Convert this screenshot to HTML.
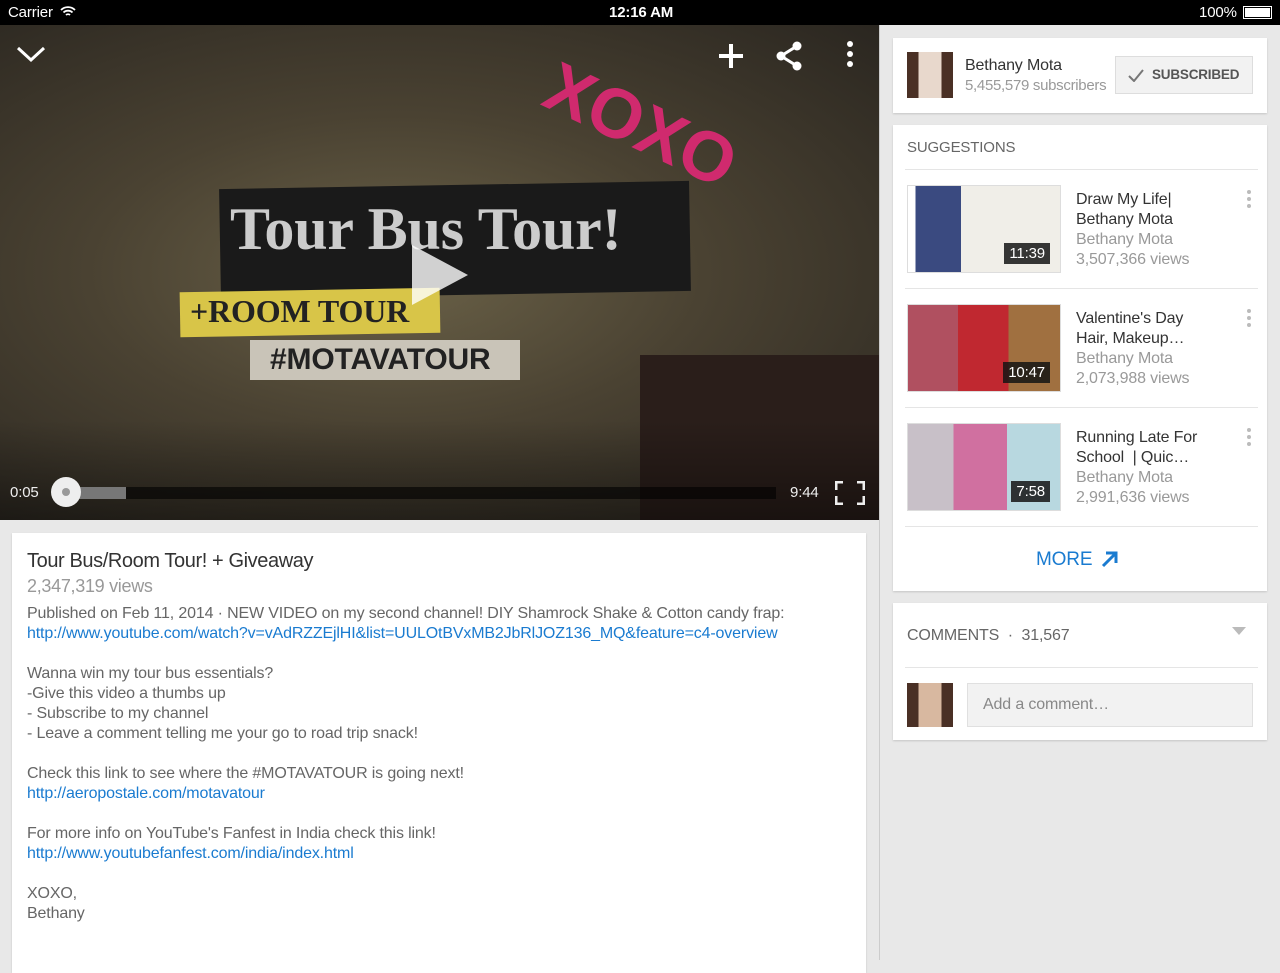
<!DOCTYPE html>
<html><head><meta charset="utf-8"><style>
*{margin:0;padding:0;box-sizing:border-box}
body{width:1280px;height:960px;overflow:hidden;background:#e8e8e8;font-family:"Liberation Sans",sans-serif;position:relative;letter-spacing:-0.15px}
.status{position:absolute;left:0;top:0;width:1280px;height:25px;background:#000;color:#fff;font-size:15px}
.video{position:absolute;left:0;top:25px;width:880px;height:495px;background:radial-gradient(ellipse at 45% 50%,#6b6248 0%,#4a4232 45%,#2a2620 100%);overflow:hidden}
.card{position:absolute;background:#fff;box-shadow:0 1px 2px rgba(0,0,0,.15)}
.a{color:#1a7bd0}
.desc{font-size:16px;color:#666;line-height:20px}
.g{color:#999}
.thumb{position:absolute;left:907px;width:154px;height:88px;border:1px solid #ddd}
.dur{position:absolute;right:10px;bottom:8px;background:rgba(20,20,20,.85);color:#fff;font-size:15px;padding:2px 5px}
.st{position:absolute;left:1076px;font-size:16px;line-height:20px;color:#333}
.dots{position:absolute;left:1247px;width:4px}
.dots i{display:block;width:4px;height:4px;border-radius:2px;background:#bbb;margin-bottom:3px}
.sep{position:absolute;left:905px;width:353px;height:1px;background:#e5e5e5}
</style></head><body>
<div class="status"><span style="position:absolute;left:8px;top:4px">Carrier</span>
<svg style="position:absolute;left:60px;top:5px" width="16" height="13" viewBox="0 0 16 13"><path d="M1 5a10 10 0 0 1 14 0M3.5 7.5a6.5 6.5 0 0 1 9 0M6 10a3 3 0 0 1 4 0" stroke="#fff" stroke-width="1.8" fill="none"/></svg>
<span style="position:absolute;left:609px;top:4px;font-weight:bold">12:16 AM</span>
<span style="position:absolute;left:1199px;top:4px">100%</span>
<div style="position:absolute;left:1243px;top:6px;width:29px;height:13px;border:1px solid #fff;padding:1px"><div style="background:#fff;height:100%"></div></div></div>
<div class="video">
<div style="position:absolute;left:220px;top:160px;width:470px;height:110px;background:#1a1a1a;transform:rotate(-1deg)"></div>
<div style="position:absolute;left:230px;top:170px;font:bold 60px 'Liberation Serif',serif;color:#ccc">Tour Bus Tour!</div>
<div style="position:absolute;left:180px;top:265px;width:260px;height:45px;background:#d8c548;transform:rotate(-1deg)"></div>
<div style="position:absolute;left:190px;top:268px;font:bold 32px 'Liberation Serif',serif;color:#222">+ROOM TOUR</div>
<div style="position:absolute;left:250px;top:315px;width:270px;height:40px;background:#c9c4b8"></div>
<div style="position:absolute;left:270px;top:318px;font:bold 30px 'Liberation Sans',sans-serif;color:#222">#MOTAVATOUR</div>
<div style="position:absolute;left:540px;top:60px;font:bold 70px 'Liberation Sans',sans-serif;color:#d02a6e;transform:rotate(25deg)">XOXO</div>
<div style="position:absolute;left:640px;top:330px;width:240px;height:165px;background:#2a1e1a"></div>
<div style="position:absolute;left:0;top:395px;width:880px;height:100px;background:linear-gradient(transparent,rgba(0,0,0,.4))"></div>
<svg style="position:absolute;left:410px;top:220px" width="58" height="60"><path d="M2 0L58 30L2 60Z" fill="rgba(255,255,255,.8)"/></svg>
<svg style="position:absolute;left:16px;top:20px" width="30" height="18"><path d="M2 3L15 15L28 3" stroke="#fff" stroke-width="3" fill="none"/></svg>
<svg style="position:absolute;left:717px;top:17px" width="28" height="28"><path d="M14 2V26M2 14H26" stroke="#fff" stroke-width="4"/></svg>
<svg style="position:absolute;left:776px;top:16px" width="28" height="30"><circle cx="21" cy="5" r="4.5" fill="#fff"/><circle cx="5" cy="15" r="4.5" fill="#fff"/><circle cx="21" cy="25" r="4.5" fill="#fff"/><path d="M21 5L5 15L21 25" stroke="#fff" stroke-width="3" fill="none"/></svg>
<div style="position:absolute;left:847px;top:16px"><div style="width:6px;height:6px;border-radius:3px;background:#fff;margin-bottom:4px"></div><div style="width:6px;height:6px;border-radius:3px;background:#fff;margin-bottom:4px"></div><div style="width:6px;height:6px;border-radius:3px;background:#fff"></div></div>
<span style="position:absolute;left:10px;top:459px;color:#eee;font-size:15px">0:05</span>
<div style="position:absolute;left:66px;top:462px;width:710px;height:12px;background:rgba(0,0,0,.6)"></div>
<div style="position:absolute;left:66px;top:462px;width:60px;height:12px;background:#777"></div>
<div style="position:absolute;left:51px;top:452px;width:30px;height:30px;border-radius:15px;background:#eee"><div style="margin:11px;width:8px;height:8px;border-radius:4px;background:#999"></div></div>
<span style="position:absolute;left:790px;top:459px;color:#eee;font-size:15px">9:44</span>
<svg style="position:absolute;left:835px;top:456px" width="30" height="24"><path d="M1 9V1H8M22 1H29V9M29 15V23H22M8 23H1V15" stroke="#eee" stroke-width="3" fill="none"/></svg>
</div>
<div style="position:absolute;left:879px;top:25px;width:1px;height:935px;background:#ccc"></div>
<div class="card" style="left:12px;top:533px;width:854px;height:440px">
<div style="position:absolute;left:15px;top:17px;font-size:20px;color:#333;letter-spacing:-0.4px">Tour Bus/Room Tour! + Giveaway</div>
<div style="position:absolute;left:15px;top:43px;font-size:18px;color:#999;letter-spacing:-0.3px">2,347,319 views</div>
<div class="desc" style="position:absolute;left:15px;top:71px;width:830px">Published on Feb 11, 2014 · NEW VIDEO on my second channel! DIY Shamrock Shake &amp; Cotton candy frap:<br><span class="a">http://www.youtube.com/watch?v=vAdRZZEjlHI&amp;list=UULOtBVxMB2JbRlJOZ136_MQ&amp;feature=c4-overview</span><br><br>Wanna win my tour bus essentials?<br>-Give this video a thumbs up<br>- Subscribe to my channel<br>- Leave a comment telling me your go to road trip snack!<br><br>Check this link to see where the #MOTAVATOUR is going next!<br><span class="a">http://aeropostale.com/motavatour</span><br><br>For more info on YouTube's Fanfest in India check this link!<br><span class="a">http://www.youtubefanfest.com/india/index.html</span><br><br>XOXO,<br>Bethany</div>
</div>
<div class="card" style="left:893px;top:38px;width:374px;height:75px">
<div style="position:absolute;left:14px;top:14px;width:46px;height:46px;background:linear-gradient(90deg,#4a3025 0 25%,#e8d8cc 25% 75%,#4a3025 75%)"></div>
<div style="position:absolute;left:72px;top:19px;font-size:16px;color:#333">Bethany Mota</div>
<div style="position:absolute;left:72px;top:39px;font-size:15px;color:#999;letter-spacing:-0.3px">5,455,579 subscribers</div>
<div style="position:absolute;left:222px;top:18px;width:138px;height:38px;background:#f2f2f2;border:1px solid #ddd;font-size:13.5px;font-weight:bold;color:#555;line-height:36px;padding-left:36px;letter-spacing:-0.2px">SUBSCRIBED
<svg style="position:absolute;left:12px;top:12px" width="16" height="13"><path d="M1 7L6 12L15 1" stroke="#777" stroke-width="2" fill="none"/></svg></div>
</div>
<div class="card" style="left:893px;top:125px;width:374px;height:466px"></div>
<div style="position:absolute;left:907px;top:139px;font-size:15px;color:#666">SUGGESTIONS</div>
<div class="sep" style="top:169px"></div>
<div class="thumb" style="top:185px;background:linear-gradient(90deg,#fff 0 5%,#3a4a80 5% 35%,#f0eee8 35%)"><div class="dur">11:39</div></div>
<div class="st" style="top:190px">Draw My Life|<br>Bethany Mota<br><span class="g">Bethany Mota<br>3,507,366 views</span></div>
<div class="dots" style="top:190px"><i></i><i></i><i></i></div>
<div class="sep" style="top:288px"></div>
<div class="thumb" style="top:304px;background:linear-gradient(90deg,#b05060 0 33%,#c02830 33% 66%,#a07040 66%)"><div class="dur">10:47</div></div>
<div class="st" style="top:309px">Valentine's Day<br>Hair, Makeup…<br><span class="g">Bethany Mota<br>2,073,988 views</span></div>
<div class="dots" style="top:309px"><i></i><i></i><i></i></div>
<div class="sep" style="top:407px"></div>
<div class="thumb" style="top:423px;background:linear-gradient(90deg,#c8c0c8 0 30%,#d070a0 30% 65%,#b8d8e0 65%)"><div class="dur">7:58</div></div>
<div class="st" style="top:428px">Running Late For<br>School &nbsp;| Quic…<br><span class="g">Bethany Mota<br>2,991,636 views</span></div>
<div class="dots" style="top:428px"><i></i><i></i><i></i></div>
<div class="sep" style="top:526px"></div>
<div style="position:absolute;left:1036px;top:549px;font-size:19px;color:#1a7bd0">MORE</div>
<svg style="position:absolute;left:1101px;top:550px" width="18" height="18"><path d="M2 16L15 3M5 3H15V13" stroke="#1a7bd0" stroke-width="3" fill="none"/></svg>
<div class="card" style="left:893px;top:603px;width:374px;height:137px"></div>
<div style="position:absolute;left:907px;top:627px;font-size:16px;color:#666">COMMENTS &nbsp;· &nbsp;31,567</div>
<svg style="position:absolute;left:1232px;top:627px" width="14" height="8"><path d="M0 0H14L7 8Z" fill="#bbb"/></svg>
<div class="sep" style="top:667px"></div>
<div style="position:absolute;left:907px;top:683px;width:46px;height:44px;background:linear-gradient(90deg,#4a3025 0 25%,#d8b8a0 25% 75%,#4a3025 75%)"></div>
<div style="position:absolute;left:967px;top:683px;width:286px;height:44px;background:#f2f2f2;border:1px solid #e0e0e0;font-size:16px;color:#888;line-height:42px;padding-left:15px">Add a comment…</div>
</body></html>
